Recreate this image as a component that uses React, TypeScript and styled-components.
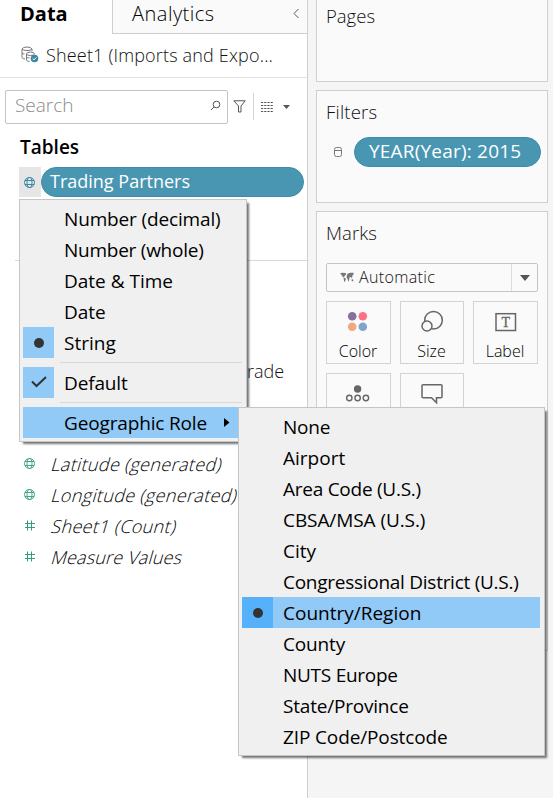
import React from 'react';
import styled, { createGlobalStyle } from 'styled-components';

const Global = createGlobalStyle`
  * { box-sizing: border-box; }
  body { margin: 0; background: #f5f5f5; overflow: hidden; }
  svg { display: block; flex: none; }
`;

const Workspace = styled.div`
  position: relative;
  display: flex;
  width: 553px;
  height: 798px;
  overflow: hidden;
  color: #111;
  font: 300 20px 'Open Sans', sans-serif;
`;

const Txt = styled.span<{ $size?: number; $ls?: number; $weight?: number }>`
  display: block;
  white-space: nowrap;
  font-size: ${p => p.$size ?? 18}px;
  letter-spacing: ${p => p.$ls ?? 0}px;
  font-weight: ${p => p.$weight ?? 300};
`;

const SlantedTxt = styled(Txt)`
  transform: skewX(-16deg);
`;

const DataPane = styled.section`
  width: 308px;
  flex: none;
  background: #fff;
  border-right: 1px solid #cfcfcf;
`;

const Tabs = styled.div`
  display: flex;
  height: 34px;
  color: #000;
`;

const DataTab = styled.div`
  width: 112px;
  padding-left: 20px;
  line-height: 28px;
`;

const AnalyticsTab = styled.div`
  flex: 1;
  display: flex;
  justify-content: space-between;
  padding: 0 8px 0 19px;
  line-height: 28px;
  background: #fafafa;
  border: solid #cfcfcf;
  border-width: 0 0 1px 1px;
`;

const Source = styled.div`
  display: flex;
  align-items: center;
  height: 44px;
  gap: 7px;
  padding: 0 0 2px 21px;
  border-bottom: 1px solid #e3e3e3;
`;

const Tools = styled.div`
  display: flex;
  align-items: center;
  height: 35px;
  margin: 11px 0 0 5px;
`;

const SearchBox = styled.div`
  display: flex;
  align-items: center;
  justify-content: space-between;
  width: 223px;
  height: 34px;
  margin-right: 5px;
  padding: 0 6px 3px 9px;
  border: 1px solid #c4c4c4;
  border-radius: 2px;
  color: #8c8c8c;
`;

const ToolDivider = styled.div`
  width: 1px;
  height: 27px;
  margin: 0 7px;
  background: #d4d4d4;
`;

const Heading = styled.div`
  height: 43px;
  padding: 7px 0 0 20px;
  line-height: 32px;
  color: #000;
`;

const FieldRow = styled.div`
  display: flex;
  height: 30px;
  margin-left: 19px;
`;

const TypeButton = styled.div`
  display: flex;
  align-items: center;
  width: 22px;
  padding-left: 4px;
  background: #e6e6e6;
`;

const Pill = styled.div<{ $w: number; $pad: number }>`
  flex: none;
  width: ${p => p.$w}px;
  height: 30px;
  padding-left: ${p => p.$pad}px;
  line-height: 27px;
  border-radius: 15px;
  border: 1px solid #3f8aa8;
  background: #4996b2;
  color: #fff;
`;

const Rule = styled.div`
  height: 1px;
  margin: 63px 0 0 15px;
  background: #d9d9d9;
`;

const ClippedField = styled.div`
  height: 31px;
  margin: 95px 0 61px;
  padding-left: 247px;
  line-height: 30px;
`;

const Measure = styled.div`
  display: flex;
  align-items: center;
  height: 31px;
  gap: 16px;
  padding-left: 23px;
  color: #000;
`;

const Shelves = styled.section`
  flex: none;
  width: 240px;
  padding-left: 8px;
`;

const Card = styled.div<{ $h: number; $first?: boolean }>`
  height: ${p => p.$h}px;
  width: 232px;
  margin-bottom: 8px;
  padding: ${p => (p.$first ? 1 : 6)}px 9px 0;
  border: 1px solid #cfcfcf;
  border-top-width: ${p => (p.$first ? 0 : 1)}px;
  background: #fafafa;
`;

const CardTitle = styled.div`
  height: 30px;
  line-height: 29px;
`;

const FilterRow = styled.div`
  display: flex;
  align-items: center;
  gap: 11px;
  padding: 10px 0 0 8px;
`;

const MarkSelect = styled.div`
  display: flex;
  align-items: center;
  width: 212px;
  height: 29px;
  gap: 5px;
  margin-top: 15px;
  padding-left: 13px;
  border: 1px solid #c4c4c4;
  border-radius: 2px;
  line-height: 27px;
`;

const SelectValue = styled(Txt)`
  height: 27px;
`;

const SelectArrow = styled.div`
  display: flex;
  align-items: center;
  justify-content: center;
  width: 26px;
  height: 27px;
  margin-left: auto;
  border-left: 1px solid #dcdcdc;
`;

const MarkGrid = styled.div`
  display: grid;
  grid-template-columns: 65px 64px 65px;
  grid-auto-rows: 63px;
  gap: 9px;
  margin-top: 9px;
`;

const MarkButton = styled.div`
  display: flex;
  flex-direction: column;
  align-items: center;
  border: 1px solid #d2d2d2;
  padding: 6px 1px 0 0;
  color: #000;
  line-height: 35px;
`;

const Menu = styled.div<{ $x: number; $y: number; $w: number }>`
  position: absolute;
  left: ${p => p.$x}px;
  top: ${p => p.$y}px;
  width: ${p => p.$w}px;
  padding: 3px;
  border: 1px solid #c6c6c6;
  background: #f0f0f0;
  box-shadow: 3px 3px 2px -1px rgba(0, 0, 0, 0.55);
  color: #000;
`;

const Item = styled.div<{ $on?: boolean }>`
  display: flex;
  align-items: center;
  height: 31px;
  margin-right: 1px;
  background: ${p => (p.$on ? '#91c9f7' : 'transparent')};
`;

const Mark = styled.div<{ $bg?: string }>`
  display: flex;
  align-items: center;
  justify-content: center;
  width: 31px;
  height: 31px;
  margin-right: 10px;
  background: ${p => p.$bg ?? 'transparent'};
`;

const SubmenuArrow = styled.svg`
  margin-left: auto;
  margin-right: 12px;
`;

const Separator = styled.div`
  height: 1px;
  margin: 4px 1px 4px 37px;
  background: #d7d7d7;
`;

const Globe = ({ c }: { c: string }) => (
  <svg width="13" height="13" viewBox="0 0 13 13" fill="none" stroke={c}>
    <circle cx="6.5" cy="6.5" r="5" />
    <ellipse cx="6.5" cy="6.5" rx="2.5" ry="5" />
    <path d="M2 4.5h9M2 8.5h9" />
  </svg>
);
const Hash = () => (
  <svg width="13" height="13" viewBox="0 0 13 13" stroke="#2f9f76">
    <path d="M4.500 1.500v10M8.500 1.500v10M2 4.500h10M2 8.500h10" />
  </svg>
);
const Dot = () => (
  <svg width="13" height="13"><circle cx="7" cy="7" r="5" fill="#333" /></svg>
);
const Check = () => (
  <svg width="17" height="13" fill="none" stroke="#333" strokeWidth="2"><path d="M2 5.500l4.500 4.500L16 1" /></svg>
);
const WorldMap = () => (
  <svg width="14" height="11" fill="#777">
    <path d="M0 1.500l2-.8 3.500.3.800 1.200-1.600 1.600L4 5.500 2.200 4.200 1.700 3zM3.500 5.500L6 6.500 5 9.500 4.200 10zM6.800 3.500l.700-1.800L10 .8h3.600v1.600l-1.100.800-.200 2-1 .800-.800-1-1 .200-.300 3-1 1.300-.700-2.700-.9-1zM11.300 7.500l1.700-.200.500 1.500-1.500.700z" />
  </svg>
);

const ColorIcon = () => (
  <svg width="31" height="26">
    <circle cx="9.200" cy="8.300" r="4.300" fill="#86709c" /><circle cx="19.800" cy="8.300" r="4.300" fill="#fb7280" />
    <circle cx="9.200" cy="18.800" r="4.300" fill="#f4a77e" /><circle cx="19.800" cy="18.800" r="4.300" fill="#7fa5cc" />
  </svg>
);
const SizeIcon = () => (
  <svg width="31" height="26" stroke="#666" strokeWidth="1.500" fill="#fafafa">
    <circle cx="17.500" cy="12.300" r="8.800" /><circle cx="11" cy="18" r="5" />
  </svg>
);
const LabelIcon = () => (
  <svg width="31" height="26">
    <rect x="6" y="5.700" width="19.500" height="16.800" fill="none" stroke="#666" strokeWidth="1.500" />
    <text x="15.700" y="19" textAnchor="middle" fontFamily="Liberation Serif" fontSize="14" fill="#666" stroke="#666" strokeWidth=".3">T</text>
  </svg>
);
const DetailIcon = () => (
  <svg width="31" height="26" fill="none" stroke="#666" strokeWidth="1.400">
    <circle cx="14.600" cy="9" r="3" fill="#666" />
    <circle cx="6.300" cy="18" r="2.700" /><circle cx="14.600" cy="18" r="2.700" /><circle cx="22.900" cy="18" r="2.700" />
  </svg>
);
const TooltipIcon = () => (
  <svg width="31" height="26" fill="none" stroke="#666" strokeWidth="1.500">
    <path d="M7 4.700h18q1 0 1 1v11q0 1-1 1h-4.500v5l-5-5H7q-1 0-1-1v-11q0-1 1-1z" />
  </svg>
);

const geoRoles: [string, number][] = [
  ['None', -0.2], ['Airport', 0], ['Area Code (U.S.)', -0.26], ['CBSA/MSA (U.S.)', -0.08], ['City', 0],
  ['Congressional District (U.S.)', -0.27], ['Country/Region', 0], ['County', -0.15],
  ['NUTS Europe', -0.27], ['State/Province', -0.2], ['ZIP Code/Postcode', -0.13],
];

const MenuText = ({ t, ls = 0 }: { t: string; ls?: number }) => <Txt $size={19} $weight={400} $ls={ls}>{t}</Txt>;

export default function App() {
  return (
    <Workspace>
      <Global />
      <DataPane>
        <Tabs>
          <DataTab><Txt $size={20} $weight={700}>Data</Txt></DataTab>
          <AnalyticsTab>
            <Txt $size={20} $weight={350} $ls={0.5}>Analytics</Txt>
            <svg width="6" height="28" fill="none" stroke="#555"><path d="M5.500 9L1 13.500l4.500 4.500" /></svg>
          </AnalyticsTab>
        </Tabs>
        <Source>
          <svg width="18" height="17" fill="none" stroke="#777">
            <path d="M1 3v8.500q1 1.500 3 1.500M1 3q1-2 5-2t5 2q-1 1.500-5 1.500T1 3M1 7q1 1 2.500 1M11 3v2M5.500 8q0-2 4-2t4 2q-.500 1.500-4 1.500t-4-1.500v6q.500 1.500 3 1.500M5.500 11q1 1 3 1" />
            <circle cx="13.500" cy="12.500" r="3.800" fill="#3d87a5" stroke="none" /><path d="M11.700 12.500l1.300 1.300 2.300-2.300" stroke="#fff" />
          </svg>
          <Txt $size={18} $ls={0.17}>Sheet1 (Imports and Expo...</Txt>
        </Source>
        <Tools>
          <SearchBox>
            <Txt $size={19}>Search</Txt>
            <svg width="11" height="11" fill="none" stroke="#555"><circle cx="6.500" cy="4.500" r="3.300" /><path d="M4 7L1 10" /></svg>
          </SearchBox>
          <svg width="13" height="13" fill="none" stroke="#555"><path d="M.8.800h11.400L8 6v6H5.500V6z" /></svg>
          <ToolDivider />
          <svg width="12" height="10" stroke="#555" strokeDasharray="2.200 1"><path d="M0 .5h12M0 3.500h12M0 6.500h12M0 9.500h12" /></svg>
          <svg width="18" height="6"><path d="M10 1h7l-3.500 4z" fill="#555" /></svg>
        </Tools>
        <Heading><Txt $size={19} $weight={600}>Tables</Txt></Heading>
        <FieldRow>
          <TypeButton><Globe c="#3d87a5" /></TypeButton>
          <Pill $w={263} $pad={8}><Txt $size={18} $weight={400}>Trading Partners</Txt></Pill>
        </FieldRow>
        <Rule />
        <ClippedField><Txt>rade</Txt></ClippedField>
        <Measure><Globe c="#43a984" /><SlantedTxt $ls={0.35}>Latitude (generated)</SlantedTxt></Measure>
        <Measure><Globe c="#43a984" /><SlantedTxt $ls={0.35}>Longitude (generated)</SlantedTxt></Measure>
        <Measure><Hash /><SlantedTxt $ls={0.35}>Sheet1 (Count)</SlantedTxt></Measure>
        <Measure><Hash /><SlantedTxt $ls={0.17}>Measure Values</SlantedTxt></Measure>
      </DataPane>
      <Shelves>
        <Card $h={82} $first><CardTitle><Txt $size={18.500}>Pages</Txt></CardTitle></Card>
        <Card $h={113}>
          <CardTitle><Txt $size={18.500} $ls={0.2}>Filters</Txt></CardTitle>
          <FilterRow>
            <svg width="9" height="11" fill="none" stroke="#777"><rect x=".5" y=".5" width="7" height="9" rx="2" /><path d="M1 3.500h7" /></svg>
            <Pill $w={187} $pad={14}><Txt $size={19} $weight={400} $ls={0.2}>YEAR(Year): 2015</Txt></Pill>
          </FilterRow>
        </Card>
        <Card $h={440}>
          <CardTitle><Txt $size={18.500} $ls={0.1}>Marks</Txt></CardTitle>
          <MarkSelect>
            <WorldMap />
            <SelectValue $size={16} $ls={0.35}>Automatic</SelectValue>
            <SelectArrow><svg width="10" height="6"><path d="M0 0h10L5 6z" fill="#555" /></svg></SelectArrow>
          </MarkSelect>
          <MarkGrid>
            <MarkButton><ColorIcon /><Txt $size={16} $weight={350}>Color</Txt></MarkButton>
            <MarkButton><SizeIcon /><Txt $size={16} $weight={350}>Size</Txt></MarkButton>
            <MarkButton><LabelIcon /><Txt $size={16} $weight={350}>Label</Txt></MarkButton>
            <MarkButton><DetailIcon /></MarkButton>
            <MarkButton><TooltipIcon /></MarkButton>
          </MarkGrid>
        </Card>
      </Shelves>
      <Menu $x={19} $y={199} $w={228}>
        <Item><Mark /><MenuText t="Number (decimal)" ls={-0.15} /></Item>
        <Item><Mark /><MenuText t="Number (whole)" ls={-0.25} /></Item>
        <Item><Mark /><MenuText t="Date &amp; Time" /></Item>
        <Item><Mark /><MenuText t="Date" /></Item>
        <Item><Mark $bg="#91c9f7"><Dot /></Mark><MenuText t="String" /></Item>
        <Separator />
        <Item><Mark $bg="#91c9f7"><Check /></Mark><MenuText t="Default" ls={-0.15} /></Item>
        <Separator />
        <Item $on>
          <Mark /><MenuText t="Geographic Role" ls={-0.15} />
          <SubmenuArrow width="6" height="10"><path d="M0 0l5.500 4.500L0 9z" /></SubmenuArrow>
        </Item>
      </Menu>
      <Menu $x={238} $y={407} $w={307}>
        {geoRoles.map(([t, ls]) => (
          <Item key={t} $on={t === 'Country/Region'}>
            <Mark $bg={t === 'Country/Region' ? '#57b0fa' : undefined}>{t === 'Country/Region' && <Dot />}</Mark>
            <MenuText t={t} ls={ls} />
          </Item>
        ))}
      </Menu>
    </Workspace>
  );
}
